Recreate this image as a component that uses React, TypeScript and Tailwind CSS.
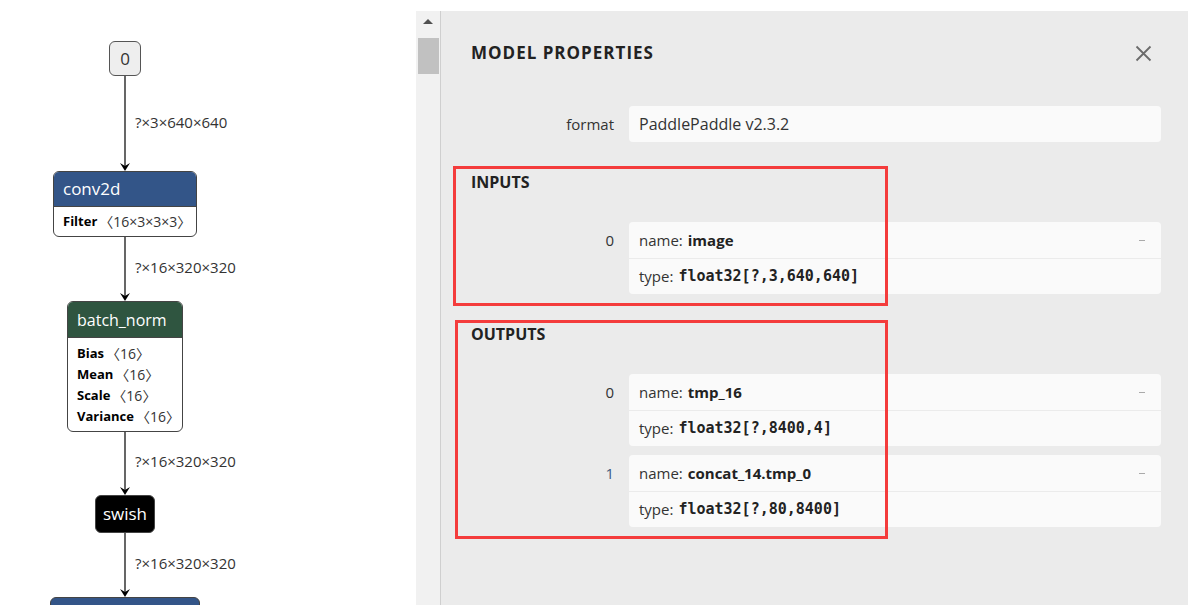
import React from "react";

const sans = "font-['Open_Sans','Noto_Sans',sans-serif]";
const mono = "font-['DejaVu_Sans_Mono','Liberation_Mono',monospace]";
const cjk = "font-['Noto_Sans_CJK_SC','Open_Sans',sans-serif]";

const Edge = ({ y1, y2, label }: { y1: number; y2: number; label: string }) => (
  <>
    <svg className="absolute left-0 top-0" width="416" height="605" style={{ pointerEvents: "none" }}>
      <line x1="125" y1={y1} x2="125" y2={y2 - 2} stroke="#000" strokeWidth="1.2" />
      <path d={`M120 ${y2 - 8} L125 ${y2} L130 ${y2 - 8} L125 ${y2 - 5} Z`} fill="#000" />
    </svg>
    <div
      className="absolute left-[135px] text-[15px] leading-[18px] text-[#333]"
      style={{ top: (y1 + y2) / 2 - 11 }}
    >
      {label}
    </div>
  </>
);

const Shape = ({ dims }: { dims: string }) => (
  <span className={`ml-[2px] text-[#333] text-[14px] ${cjk}`}>〈<span className={sans}>{dims}</span>〉</span>
);

const Graph = () => (
  <div className={`relative w-[416px] h-[605px] bg-white overflow-hidden shrink-0 ${sans}`}>
    <Edge y1={76} y2={171} label="?×3×640×640" />
    <Edge y1={236} y2={301} label="?×16×320×320" />
    <Edge y1={430} y2={495} label="?×16×320×320" />
    <Edge y1={533} y2={597} label="?×16×320×320" />

    {/* input node */}
    <div className="absolute left-[109px] top-[41px] w-[32px] h-[35px] rounded-[6px] border border-[#555] bg-[#eee] flex items-center justify-center text-[17px] text-[#333]">
      0
    </div>

    {/* conv2d */}
    <div className="absolute left-[53px] top-[171px] w-[144px] rounded-[6px] border border-[#444] bg-white overflow-hidden">
      <div className="h-[35px] bg-[#335588] text-white text-[17px] px-[9px] flex items-center border-b border-[#444]">conv2d</div>
      <div className="h-[29px] px-[9px] flex items-center text-[13px] text-[#000] whitespace-nowrap">
        <span className="font-bold">Filter</span>
        <Shape dims="16×3×3×3" />
      </div>
    </div>

    {/* batch_norm */}
    <div className="absolute left-[67px] top-[301px] w-[116px] rounded-[6px] border border-[#444] bg-white overflow-hidden">
      <div className="h-[36px] bg-[#2f5540] text-white text-[16px] px-[9px] flex items-center border-b border-[#444]">batch_norm</div>
      <div className="pt-[5px] pb-[4px] px-[9px] text-[13px] leading-[21px] text-[#000]">
        {["Bias", "Mean", "Scale", "Variance"].map((n) => (
          <div key={n} className="flex items-center whitespace-nowrap">
            <span className="font-bold">{n}</span>
            <Shape dims="16" />
          </div>
        ))}
      </div>
    </div>

    {/* swish */}
    <div className="absolute left-[95px] top-[495px] w-[60px] h-[38px] rounded-[6px] border border-[#444] bg-black text-white text-[17px] flex items-center justify-center">
      swish
    </div>

    {/* next node (cut off) */}
    <div className="absolute left-[50px] top-[597px] w-[150px] h-[40px] rounded-[6px] border border-[#444] bg-[#335588]" />
  </div>
);

const Row = ({ label, children, labelClass = "text-[#333]" }: { label: string; children: React.ReactNode; labelClass?: string }) => (
  <div className="flex">
    <div className={`w-[173px] shrink-0 text-right text-[15px] leading-[36px] ${labelClass}`}>{label}</div>
    <div className="ml-[15px] flex-1">{children}</div>
  </div>
);

const Arg = ({ name, type }: { name: string; type: string }) => (
  <div className="rounded-[4px] bg-[#fafafa] text-[15px] text-[#333]">
    <div className="h-[37px] flex items-center px-[10px] border-b border-[#ebebeb]">
      <span>name:</span>
      <span className="ml-[5px] font-bold text-[#222]">{name}</span>
      <span className="ml-auto mr-[6px] w-[6px] h-[1px] bg-[#aaa]" />
    </div>
    <div className="h-[35px] flex items-center px-[10px]">
      <span>type:</span>
      <span className={`ml-[5px] font-bold text-[#222] text-[15px] ${mono}`}>{type}</span>
    </div>
  </div>
);

const Properties = () => (
  <div className={`flex-1 flex flex-col ${sans}`}>
    <div className="h-[11px] bg-white" />
    <div className="flex flex-1">
      {/* scrollbar */}
      <div className="w-[25px] bg-[#f1f1f1] border-r border-[#cfcfcf] flex flex-col items-center">
        <div className="mt-[8px] w-0 h-0 border-l-[5px] border-r-[5px] border-b-[5px] border-l-transparent border-r-transparent border-b-[#505050]" />
        <div className="mt-[14px] w-[21px] h-[36px] bg-[#c1c1c1]" />
      </div>
      {/* content */}
      <div className="flex-1 bg-[#ebebeb] pt-[30px] pr-[27px]">
        <div className="flex items-center h-[24px] pl-[30px]">
          <div className="text-[17px] font-bold tracking-[1px] text-[#222]">MODEL PROPERTIES</div>
          <svg className="ml-auto mr-[9px]" width="17" height="17" viewBox="0 0 17 17">
            <path d="M1.5 1.5 L15.5 15.5 M15.5 1.5 L1.5 15.5" stroke="#6b6b6b" strokeWidth="1.8" />
          </svg>
        </div>

        <div className="mt-[41px]">
          <Row label="format">
            <div className="h-[36px] rounded-[4px] bg-[#fafafa] flex items-center px-[10px] text-[16px] text-[#333]">
              PaddlePaddle v2.3.2
            </div>
          </Row>
        </div>

        <div className="mt-[28px] h-[24px] flex items-center pl-[30px] text-[16px] font-bold text-[#222]">INPUTS</div>
        <div className="mt-[28px]">
          <Row label="0">
            <Arg name="image" type="float32[?,3,640,640]" />
          </Row>
        </div>

        <div className="mt-[28px] h-[24px] flex items-center pl-[30px] text-[16px] font-bold text-[#222]">OUTPUTS</div>
        <div className="mt-[28px] flex flex-col gap-[9px]">
          <Row label="0">
            <Arg name="tmp_16" type="float32[?,8400,4]" />
          </Row>
          <Row label="1" labelClass="text-[#3d5a80]">
            <Arg name="concat_14.tmp_0" type="float32[?,80,8400]" />
          </Row>
        </div>
      </div>
    </div>
  </div>
);

export default function App() {
  return (
    <div className="relative w-[1188px] h-[605px] flex overflow-hidden bg-white">
      <Graph />
      <Properties />
      {/* annotation boxes */}
      <div className="absolute left-[453px] top-[166px] w-[435px] h-[140px] border-[3px] border-[#f43c3c] pointer-events-none" />
      <div className="absolute left-[455px] top-[320px] w-[433px] h-[219px] border-[3px] border-[#f43c3c] pointer-events-none" />
    </div>
  );
}
